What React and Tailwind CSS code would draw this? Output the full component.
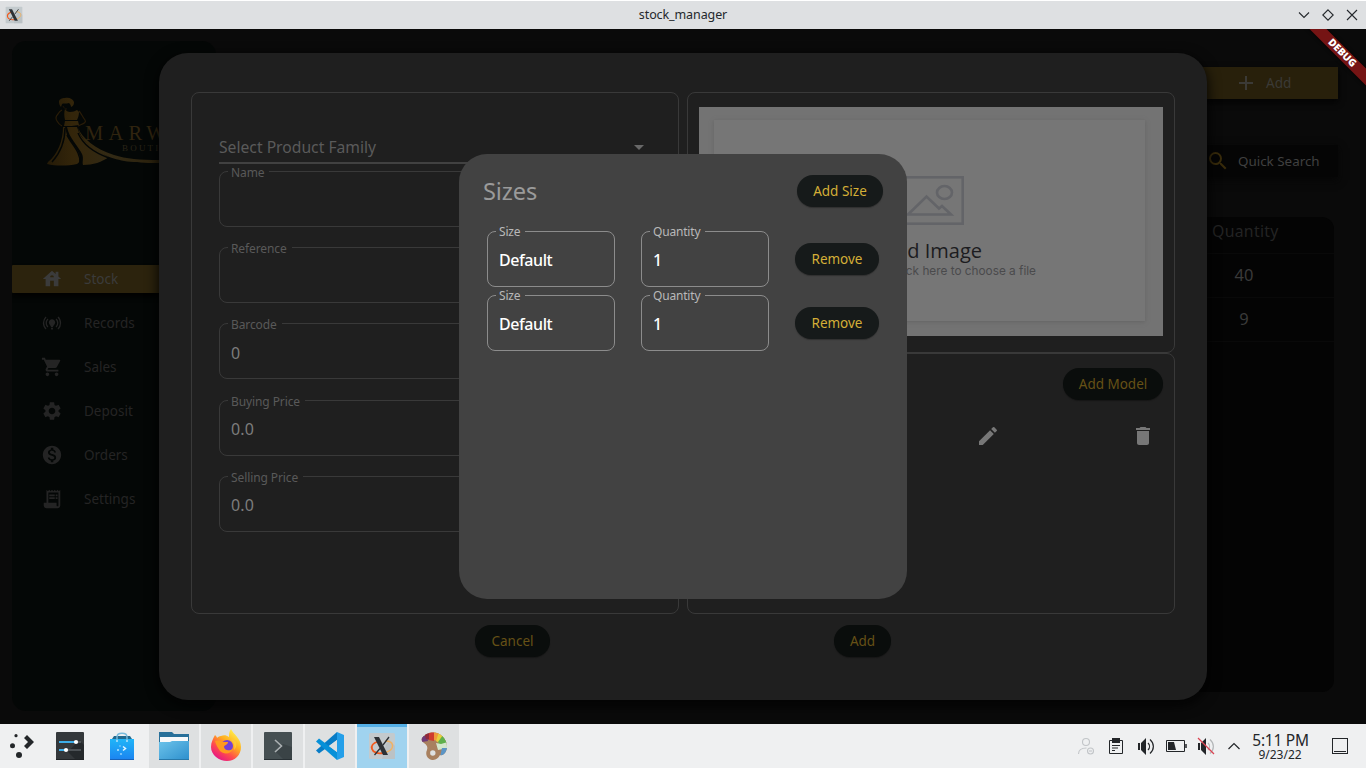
import React from "react";
import {
  MdHouse,
  MdOnlinePrediction,
  MdShoppingCart,
  MdSettings,
  MdMonetizationOn,
  MdReceiptLong,
  MdEdit,
  MdDelete,
  MdAdd,
  MdSearch,
  MdArrowDropDown,
} from "react-icons/md";

const NAV = [
  { label: "Stock", Icon: MdHouse, active: true },
  { label: "Records", Icon: MdOnlinePrediction },
  { label: "Sales", Icon: MdShoppingCart },
  { label: "Deposit", Icon: MdSettings },
  { label: "Orders", Icon: MdMonetizationOn },
  { label: "Settings", Icon: MdReceiptLong },
];

function XIcon({ className }) {
  return (
    <svg viewBox="0 0 28 28" className={className}>
      <rect x="1" y="1" width="26" height="26" rx="1.500" fill="#c3cacd" />
      <path d="M14 27h13V14L20 6z" fill="#b6bdc0" opacity=".6" />
      <path d="M10 9.500C5 11 3 13.500 4 17c1 3.500 6 5 11 4" fill="none" stroke="#f2591c" strokeWidth="1.800" />
      <path d="M15 21c6-1 10-4 9.500-8C24 10 21 9 17.500 9" fill="none" stroke="#f3b25f" strokeWidth="1.400" />
      <path d="M6 5h5l9 18h-5z" fill="#2c3135" />
      <path d="M21 5 15 13M12 16.500 6.500 23" stroke="#2c3135" strokeWidth="1.300" />
    </svg>
  );
}

function TitleBar() {
  return (
    <header className="grid h-[29px] shrink-0 grid-cols-3 items-center border-t border-white bg-[#dee0e2] text-[#24282c]">
      <div className="pl-[5px]">
        <XIcon className="size-[18px]" />
      </div>
      <div className="text-center text-[12.500px] leading-[18px] tracking-[-.1px]">stock_manager</div>
      <div className="flex justify-end gap-[12px] pr-[8px]">
        {["M1 3.500 6 8.500l5-5", "M6 .8 11.200 6 6 11.200.800 6z", "M1 1l10 10M11 1 1 11"].map((d) => (
          <svg key={d} viewBox="0 0 12 12" className="size-3 overflow-visible" fill="none" stroke="#24282c" strokeWidth="1.100">
            <path d={d} />
          </svg>
        ))}
      </div>
    </header>
  );
}

function Logo() {
  return (
    <div className="ml-[34px] flex h-[72px] w-[170px]">
      <svg viewBox="0 0 130 72" className="h-[72px] w-[130px] shrink-0" fill="url(#gold)">
        <defs>
          <linearGradient id="gold" x1="0" x2="130" y1="0" y2="0" gradientUnits="userSpaceOnUse">
            <stop offset="0" stopColor="#241a07" />
            <stop offset=".2" stopColor="#33250a" />
            <stop offset=".5" stopColor="#332a15" />
            <stop offset="1" stopColor="#291f0a" />
          </linearGradient>
        </defs>
        <path d="M13 5c0-3 3-4 6-4 4-1 8 1 9 4 0 3-1 4-3 5 0-2-1-3-2-4-3 1-6 0-7 1l-1 3c-1-1-2-3-2-5z" />
        <path d="M17 9c1 2 2 3 4 3" fill="none" stroke="#241807" strokeWidth=".8" />
        <path d="M19 12c1 2 3 3 5 3 3 0 5-1 7-2l2 2c0 3-1 6-2 8H19c-1-4-1-8 0-11z" />
        <path d="M19 24h13l1 4c-5 1-10 1-15 1z" />
        <path d="M16 13c-2 1-3 2-4 4-2 2-3 4-1 7 1 2 3 4 5 5M33 14c2 2 3 5 6 9 2 3-3 4-7 6" fill="none" stroke="#291c08" strokeWidth="1.200" />
        <path d="M17 30c0 13-5 27-15 35l-1 2c9 2 20 2 30 0 2-1 3-3 3-6-1-8-9-16-12-21-2-4-2-7-3-10z" />
        <path d="M21 30h10c1 3 2 6 4 9 5 7 17 16 28 21-7 5-16 8-26 8-1-3 1-7-1-11-3-7-13-16-15-27z" />
        <path d="M32 31c4 10 17 21 36 27 12 4 26 5 45 5h17v3h-18c-26 0-39-2-51-7-15-6-27-18-29-28z" />
        <path d="M19 31c0 14-4 24-13 34M21 38c4 9 14 17 13 28" fill="none" stroke="#040706" strokeWidth="1.400" />
        <path d="M32 36c5 12 17 20 31 25" fill="none" stroke="#040706" strokeWidth="1.400" />
      </svg>
      <div className="-ml-[91px] flex flex-col whitespace-nowrap pt-[25px] font-['Liberation_Serif',serif]">
        <span className="text-[20.500px] leading-[22px] tracking-[5.200px] text-[#30240f]">MARW</span>
        <span className="pl-[37px] text-[9px] leading-[8px] tracking-[2.200px] text-[#292417]">BOUTI</span>
      </div>
    </div>
  );
}

function Sidebar() {
  return (
    <aside className="flex h-[670px] w-[204px] flex-col overflow-hidden rounded-[14px] bg-[#040706] pt-[56px]">
      <Logo />
      <nav className="mt-[96px] flex flex-col gap-4">
        {NAV.map(({ label, Icon, active }) => (
          <div
            key={label}
            className={
              active
                ? "flex h-7 items-center rounded-[1px] bg-[#2c230d] pl-[29px] text-[#3b3b3b] shadow-[0_4px_5px_#020202]"
                : "flex h-7 items-center pl-[29px] text-[#242424]"
            }
          >
            <Icon className="size-[22px]" />
            <span className="ml-[21px] text-[13.500px]">{label}</span>
          </div>
        ))}
      </nav>
    </aside>
  );
}

function StockPage() {
  return (
    <div className="flex h-full bg-[#0a0a0a] pl-3 pt-3">
      <Sidebar />
      <div className="ml-auto mr-7 flex w-[178px] flex-col pt-[26px]">
        <div className="flex h-8 items-center bg-[#28200b] pl-[74px] text-[#3b3a36] shadow-[0_3px_6px_#030303]">
          <MdAdd className="size-6" />
          <span className="ml-[8px] text-[13.500px]">Add</span>
        </div>
        <div className="mt-[46px] flex h-8 items-center bg-[#050505] pl-[46px] shadow-[0_3px_8px_#060606]">
          <MdSearch className="size-6 text-[#382b0b]" />
          <span className="ml-[8px] whitespace-nowrap text-[13.400px] text-[#404040]">Quick Search</span>
        </div>
        <div className="mr-1 mt-10 h-[475px] rounded-[12px] bg-[#040404] text-center text-[#3a3a3a]">
          <div className="flex h-[37px] items-center border-b border-[#090909] pb-[6px] pl-[52px] text-[15.800px] tracking-[.3px] text-[#232323]">Quantity</div>
          <div className="flex h-11 items-center justify-center border-b border-[#090909] pr-[6px] text-[16.500px]">40</div>
          <div className="flex h-11 items-center justify-center border-b border-[#090909] pr-[6px] text-[16.500px]">9</div>
        </div>
      </div>
    </div>
  );
}

function ProductField({ label, value }) {
  return (
    <div className="relative flex h-14 items-center rounded-[8px] border border-[#393939] pl-[11px] pt-[3px]">
      <span className="absolute -top-[8px] left-[8px] bg-[#1f1f1f] pl-[3px] pr-[5px] text-[12px] leading-[18px] tracking-[-.1px] text-[#595959]">{label}</span>
      <span className="text-[16px] tracking-[.2px] text-[#7c7c7c]">{value}</span>
    </div>
  );
}

function SizeField({ label, value }) {
  return (
    <div className="relative flex h-14 w-32 items-center rounded-[8px] border border-[#8c8c8c] pl-[11px] pt-px">
      <span className="absolute -top-[9px] left-[8px] bg-[#424242] pl-[3px] pr-[5px] text-[12px] leading-[18px] tracking-[-.18px] text-[#b9b9b9]">{label}</span>
      <span className="text-[16px] font-medium tracking-[-.42px] text-white">{value}</span>
    </div>
  );
}

function DimButton({ className, children }) {
  return (
    <button
      className={
        "flex h-8 items-center justify-center rounded-full bg-[#0a0d0c] text-[13.500px] tracking-[-.02px] text-[#665116] shadow-[0_1px_1px_#161616] " +
        className
      }
    >
      {children}
    </button>
  );
}

function GoldButton({ className, children }) {
  return (
    <button
      className={
        "flex h-8 items-center justify-center rounded-full bg-[#161a1a] pt-[2px] text-[13.500px] text-[#d4af37] shadow-[0_1px_1px_#303030] " +
        className
      }
    >
      {children}
    </button>
  );
}

function ProductDialog() {
  return (
    <section className="absolute left-[159px] top-[24px] flex h-[647px] w-[1048px] flex-col rounded-[29px] bg-[#1f1f1f] px-8 pt-[39px] shadow-[0_4px_14px_#020202]">
      <div className="flex h-[522px] gap-2">
        <div className="flex w-[488px] flex-col rounded-[8px] border border-[#393939] px-[27px] pt-[43px]">
          <div className="flex h-[28px] w-[432px] items-center justify-between border-b-2 border-[#414141] text-[15.700px] text-[#5a5a5a]">
            <span className="pb-[3px]">Select Product Family</span>
            <MdArrowDropDown className="mb-[5px] size-6 text-[#686868]" />
          </div>
          <div className="mt-[7px] flex w-[432px] flex-col gap-[20.200px]">
            <ProductField label="Name" value="" />
            <ProductField label="Reference" value="" />
            <ProductField label="Barcode" value="0" />
            <ProductField label="Buying Price" value="0.0" />
            <ProductField label="Selling Price" value="0.0" />
          </div>
        </div>
        <div className="flex w-[488px] flex-col">
          <div className="h-[261px] rounded-[8px] border border-[#393939] px-[11px] pt-[14px]">
            <div className="h-[229px] bg-[#737373] pl-[15px] pt-[13px]">
              <div className="flex h-[201px] w-[431px] flex-col bg-[#767676] pt-[56px] shadow-[0_1px_4px_#646464]">
                <svg viewBox="0 0 69 49" className="ml-[181px] h-[49px] w-[69px] shrink-0" fill="none" stroke="#636468" strokeWidth="2.600">
                  <rect x="1.300" y="1.300" width="66.400" height="46.400" />
                  <ellipse cx="49.500" cy="16.500" rx="7.500" ry="6.500" />
                  <path d="M13 38.500 31.500 20.500 44 32.500l3-2.500 9 8.500z" />
                </svg>
                <div className="mr-[163px] mt-[12px] self-end font-['Open_Sans',sans-serif] text-[20px] leading-[28px] text-[#1c1c20]">d Image</div>
                <div className="mr-[109px] self-end font-['Inter',sans-serif] text-[11.800px] leading-[12px] text-[#4a4a4c]">click here to choose a file</div>
              </div>
            </div>
          </div>
          <div className="h-[261px] rounded-[8px] border border-[#393939] px-[11px] pt-[14px]">
            <div className="flex justify-end">
              <DimButton className="w-[100px]">Add Model</DimButton>
            </div>
            <div className="mt-[24px] flex justify-end gap-[131px] pr-[8px] text-[#777777]">
              <MdEdit className="size-6" />
              <MdDelete className="size-6" />
            </div>
          </div>
        </div>
      </div>
      <div className="mt-[11px] flex pl-[284px]">
        <DimButton className="w-[75px]">Cancel</DimButton>
        <DimButton className="ml-[284px] w-[57px]">Add</DimButton>
      </div>
    </section>
  );
}

function SizesDialog() {
  return (
    <section className="absolute left-[459px] top-[125px] flex h-[445px] w-[448px] flex-col rounded-[28px] bg-[#424242] px-6 pt-[20px]">
      <div className="flex items-center justify-between">
        <h2 className="pt-px text-[23.600px] leading-8 tracking-[-.1px] text-[#9a9a9a]">Sizes</h2>
        <GoldButton className="w-[86px]">Add Size</GoldButton>
      </div>
      <div className="mt-[24px] flex flex-col gap-2 pl-[4px]">
        {[0, 1].map((row) => (
          <div key={row} className="flex items-center">
            <SizeField label="Size" value="Default" />
            <div className="ml-[26px]">
              <SizeField label="Quantity" value="1" />
            </div>
            <GoldButton className="mb-px ml-[26px] w-[84px]">Remove</GoldButton>
          </div>
        ))}
      </div>
    </section>
  );
}

function DebugRibbon() {
  return (
    <div className="absolute left-[1292px] top-[18px] flex h-3 w-[100px] rotate-45 items-center justify-center bg-[#751414] text-[10.200px] font-black text-white shadow-[0_0_4px_#000]">
      DEBUG
    </div>
  );
}

function TaskIcon({ name }) {
  if (name === "x") return <XIcon className="size-7" />;
  return (
    <svg viewBox="0 0 28 28" className="size-7 overflow-visible">
      {name === "settings" && (
        <>
          <rect width="28" height="28" rx="1" fill="#34383b" />
          <path d="M12 20 20 28h8V13l-5-5z" fill="#25292c" />
          <path d="M0 27.500h28" stroke="#202326" />
          <path d="M20 10h5M10 18h15" stroke="#5b6064" strokeWidth="1.600" />
          <path d="M3 10h17M3 18h7" stroke="#3daee9" strokeWidth="1.800" />
          <circle cx="20" cy="10" r="2.100" fill="#fff" />
          <circle cx="10" cy="18" r="2.100" fill="#fff" />
        </>
      )}
      {name === "discover" && (
        <>
          <defs>
            <linearGradient id="bag" x2="0" y2="1">
              <stop stopColor="#20b5f8" />
              <stop offset="1" stopColor="#1b83f0" />
            </linearGradient>
          </defs>
          <path d="M4 7l2-3h16l2 3z" fill="#236a8e" />
          <rect x="2" y="7" width="24" height="21" fill="url(#bag)" />
          <path d="M2 27.500h24" stroke="#1763bb" />
          <path d="M9 8.500V5c0-5 10-5 10 0v3.500" fill="none" stroke="#79bbdc" strokeWidth="1.400" />
          <circle cx="9" cy="9" r="1" fill="#b3e1fb" />
          <circle cx="19" cy="9" r="1" fill="#b3e1fb" />
          <path d="m15 14.500 2.500 2-2.500 2" fill="none" stroke="#e8f7ff" strokeWidth="1.500" />
          <circle cx="10" cy="18" r="1" fill="#b5e4ff" />
          <circle cx="12" cy="14" r=".7" fill="#b5e4ff" />
          <circle cx="13" cy="22" r="1.100" fill="#8accfa" />
        </>
      )}
      {name === "files" && (
        <>
          <defs>
            <linearGradient id="folder" x2="1" y2="1">
              <stop stopColor="#6cc3ea" />
              <stop offset="1" stopColor="#2d8fcd" />
            </linearGradient>
          </defs>
          <path d="M-1 0h13l2 2h15v13H-1z" fill="#28709a" />
          <path d="M0 5h28v6H0z" fill="#f8f9fa" />
          <path d="M-1 10h11l2-1h17v19H-1z" fill="url(#folder)" />
          <path d="M-1 27.500h30" stroke="#2878a9" />
        </>
      )}
      {name === "firefox" && (
        <>
          <defs>
            <linearGradient id="fox" x1=".9" y1=".1" x2=".3" y2="1">
              <stop stopColor="#fff44f" />
              <stop offset=".4" stopColor="#ffad1f" />
              <stop offset=".7" stopColor="#ff4c4c" />
              <stop offset="1" stopColor="#e51587" />
            </linearGradient>
          </defs>
          <path d="M3 3c1 1 2 2 2 3 1-1 2-2 4-2 3-1 5-1 8 1 0-3 0-5 2-8 2 5 10 9 10 18 0 8-6 14-14 14S-1 23-1 15C-1 10 1 7 3 3z" fill="url(#fox)" />
          <circle cx="15" cy="14" r="6" fill="#7440d5" />
          <path d="M3 9c4-1 6 0 8 1h5c0 3-4 3-4 5 1 4 5 4 9 2-2 5-9 6-13 2-2-3-4-6-5-10z" fill="#ff9a1f" />
          <path d="M19 8c3 2 4 6 3 10 2-2 3-5 2-8-1-2-3-3-5-2z" fill="#ffc83a" />
        </>
      )}
      {name === "terminal" && (
        <>
          <rect width="28" height="28" rx="1" fill="#454f52" />
          <path d="m12 20 8 8h8V15l-9-3z" fill="#3a4346" />
          <path d="m11 8 6.500 6-6.500 6" fill="none" stroke="#aab0b2" strokeWidth="1.600" />
          <path d="M0 27.500h28" stroke="#283034" />
        </>
      )}
      {name === "code" && (
        <>
          <path d="M21 0 0 18.500l3 3L21 8z" fill="#087cc6" />
          <path d="M21 28 0 9.500l3-3L21 20z" fill="#0790d8" />
          <path d="m21 0 7 3v22l-7 3z" fill="#249fe9" />
          <path d="M21 8v12l-8-6z" fill="#dddfe1" />
        </>
      )}
      {name === "paint" && (
        <>
          <defs>
            <clipPath id="palette">
              <path d="M2 6c3-5 9-6 13-5.500C23 2 27.500 9 27 16c-1 5-4 8-7 7-2 4-5 5-8 5-5-1-7-6-5-10 1-3 0-5-3-7-2-1-3-3-2-5z" />
            </clipPath>
          </defs>
          <g clipPath="url(#palette)">
            <path d="M0 0h28v28H0z" fill="#a8805f" />
            <path d="M0 4h7l1 5-6 1z" fill="#6d3a78" />
            <path d="M4 0h6v8L6 7z" fill="#8f2a3b" />
            <path d="M9 0h5v9l-5-1z" fill="#cf3b2e" />
            <path d="M14 0h6l-3 9-3-1z" fill="#ef9a3a" />
            <path d="m19 0 5 4-5 7-3-2z" fill="#e6cf3d" />
            <path d="m23 3 5 7-8 3-2-3z" fill="#5fb04c" />
            <path d="m16 11 5 1 7-2v6l-10 2z" fill="#d3e6cb" />
            <path d="M22 16h6v6l-8 3z" fill="#5b95c6" />
          </g>
          <circle cx="12.800" cy="21" r="2.700" fill="#dee0e1" />
        </>
      )}
    </svg>
  );
}

const TASKS = ["files", "firefox", "terminal", "code", "x", "paint"];

function Volume({ muted }) {
  return (
    <>
      <path d="M0 5h2v7H0zM3 5l5-5v17l-5-5z" fill="#232629" stroke="none" />
      <g fill="none" stroke={muted ? "#b3b6b8" : "#232629"} strokeWidth="1.200">
        <path d="M10 5c2 2 2 5 0 7" />
        <path d="M12 1.500c4.500 4 4.500 10 0 14" />
      </g>
      {muted && <path d="m0 0 16 16" stroke="#da4453" strokeWidth="1.200" />}
    </>
  );
}

function TrayIcon({ name }) {
  return (
    <div className="flex w-[30px] items-center justify-center">
      <svg viewBox="0 0 16 16" className="size-4 overflow-visible" fill="none" stroke="#232629">
        {name === "user" && (
          <g stroke="#c2c5c8" strokeWidth="1.100">
            <circle cx="8" cy="4" r="3.500" />
            <path d="M.5 16c0-4 3-6 8-6" />
            <circle cx="12.500" cy="13" r="3" />
            <path d="M11 13h3" />
          </g>
        )}
        {name === "clipboard" && (
          <>
            <path d="M1.500 2.500h13v13h-13z" />
            <path d="M4 0h8v5H4z" fill="#232629" stroke="none" />
            <path d="M4 7.500h8M4 10h6M4 12.500h3" />
          </>
        )}
        {name === "volume" && <Volume />}
        {name === "muted" && <Volume muted />}
        {name === "battery" && (
          <>
            <path d="M-1.500 2.500h18v11h-18z" />
            <path d="M18 6v4" strokeWidth="1.500" />
            <path d="M0 4h6l2 8H0z" fill="#232629" stroke="none" />
          </>
        )}
      </svg>
    </div>
  );
}

function Taskbar() {
  return (
    <footer className="flex h-11 shrink-0 bg-[#eff0f1] text-[#232629]">
      <div className="flex w-11 items-center justify-center">
        <svg viewBox="0 0 24 24" className="size-6 overflow-visible" fill="#232629">
          <path d="m14 4 3-3 7 7-7 7-3-3 4-4z" />
          <circle cx="6" cy="1.700" r="1.600" />
          <circle cx="2.500" cy="11.700" r="2.500" />
          <circle cx="9" cy="21" r="3" />
        </svg>
      </div>
      <div className="flex w-[52px] items-center justify-center">
        <TaskIcon name="settings" />
      </div>
      <div className="flex w-[52px] items-center justify-center">
        <TaskIcon name="discover" />
      </div>
      <div className="flex gap-[2px] px-px">
        {TASKS.map((name) => (
          <div
            key={name}
            className={
              name === "x"
                ? "flex w-[50px] items-center justify-center bg-[#a0d3ef] shadow-[inset_0_3px_0_#54afe6]"
                : "flex w-[50px] items-center justify-center bg-[#dee0e1]"
            }
          >
            <TaskIcon name={name} />
          </div>
        ))}
      </div>
      <div className="ml-auto flex">
        {["user", "clipboard", "volume", "battery", "muted"].map((name) => (
          <TrayIcon key={name} name={name} />
        ))}
        <div className="flex w-[26px] items-center justify-center">
          <svg viewBox="0 0 12 8" className="h-2 w-3" fill="none" stroke="#232629" strokeWidth="1.200">
            <path d="m.5 7 5.500-5.500L11.500 7" />
          </svg>
        </div>
        <div className="flex w-[67px] flex-col items-center whitespace-nowrap pt-[7px]">
          <span className="text-[15.500px] leading-[18px] tracking-[-.25px]">5:11 PM</span>
          <span className="pr-px text-[12px] leading-[12px]">9/23/22</span>
        </div>
        <div className="flex w-[52px] items-center justify-center">
          <div className="flex size-4 flex-col justify-end border border-[#232629] px-px pb-px">
            <div className="h-px bg-[#232629]" />
          </div>
        </div>
      </div>
    </footer>
  );
}

export default function App() {
  return (
    <div className="flex h-[768px] w-[1366px] flex-col overflow-hidden font-['Noto_Sans',sans-serif]">
      <TitleBar />
      <main className="relative h-[695px] shrink-0 overflow-hidden">
        <StockPage />
        <ProductDialog />
        <SizesDialog />
        <DebugRibbon />
      </main>
      <Taskbar />
    </div>
  );
}
